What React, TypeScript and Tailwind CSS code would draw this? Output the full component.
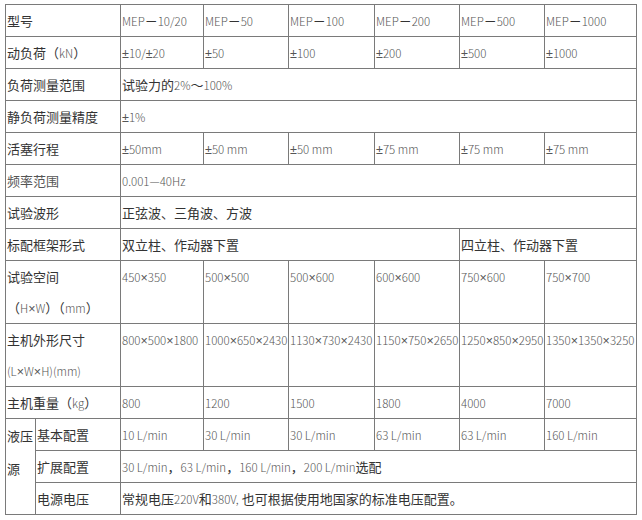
import React from 'react'

const cn = 'text-[#333] font-normal'
const num = 'text-[#555] font-light text-[11.5px] leading-none'

// × and ± come out full width in the CJK font, so draw them in a Latin one
function N({ children }: { children: string }) {
  const parts = children.split(/([×±])/)
  return (
    <span className={num}>
      {parts.map((p, i) =>
        p === '×' || p === '±' ? (
          <span key={i} className="text-[12.5px] leading-none [font-family:'Liberation_Sans',sans-serif]">{p}</span>
        ) : (
          <React.Fragment key={i}>{p}</React.Fragment>
        )
      )}
    </span>
  )
}

function C({ children }: { children: React.ReactNode }) {
  return <span className={cn}>{children}</span>
}

const cell = 'border border-[#7a7a7a] p-0 pl-px align-middle whitespace-nowrap overflow-hidden leading-[31px] text-left'
const top = 'border border-[#7a7a7a] p-0 pl-px align-top whitespace-nowrap overflow-hidden leading-[31px] text-left'

export default function App() {
  const models = ['MEP－10/20', 'MEP－50', 'MEP－100', 'MEP－200', 'MEP－500', 'MEP－1000']
  const loads = ['±10/±20', '±50', '±100', '±200', '±500', '±1000']
  const strokes = ['±50mm', '±50 mm', '±50 mm', '±75 mm', '±75 mm', '±75 mm']
  const spaces = ['450×350', '500×500', '500×600', '600×600', '750×600', '750×700']
  const dims = ['800×500×1800', '1000×650×2430', '1130×730×2430', '1150×750×2650', '1250×850×2950', '1350×1350×3250']
  const weights = ['800', '1200', '1500', '1800', '4000', '7000']
  const flows = ['10 L/min', '30 L/min', '30 L/min', '63 L/min', '63 L/min', '160 L/min']

  return (
    <div className="min-h-[520px] bg-white pl-[5px] pt-[4px] text-[13px] [font-family:'Noto_Sans_CJK_SC','Noto_Sans',sans-serif]">
      <table className="table-fixed border-collapse w-[631px]">
        <colgroup>
          <col className="w-[30px]" />
          <col className="w-[85px]" />
          <col className="w-[83px]" />
          <col className="w-[85px]" />
          <col className="w-[86px]" />
          <col className="w-[85px]" />
          <col className="w-[85px]" />
          <col className="w-[92px]" />
        </colgroup>
        <tbody>
          <tr>
            <td colSpan={2} className={cell}><C>型号</C></td>
            {models.map((m, i) => (
              <td key={i} className={cell}>
                <N>{m.split('－')[0]}</N>
                <C>－</C>
                <N>{m.split('－')[1]}</N>
              </td>
            ))}
          </tr>
          <tr>
            <td colSpan={2} className={cell}><C>动负荷（</C><N>kN</N><C>）</C></td>
            {loads.map((v, i) => (
              <td key={i} className={cell}><N>{v}</N></td>
            ))}
          </tr>
          <tr>
            <td colSpan={2} className={cell}><C>负荷测量范围</C></td>
            <td colSpan={6} className={cell}><C>试验力的</C><N>2%</N><C>～</C><N>100%</N></td>
          </tr>
          <tr>
            <td colSpan={2} className={cell}><C>静负荷测量精度</C></td>
            <td colSpan={6} className={cell}><N>±1%</N></td>
          </tr>
          <tr>
            <td colSpan={2} className={cell}><C>活塞行程</C></td>
            {strokes.map((v, i) => (
              <td key={i} className={cell}><N>{v}</N></td>
            ))}
          </tr>
          <tr>
            <td colSpan={2} className={cell}><span className="text-[#555]">频率范围</span></td>
            <td colSpan={6} className={cell}><N>0.001—40Hz</N></td>
          </tr>
          <tr>
            <td colSpan={2} className={cell}><C>试验波形</C></td>
            <td colSpan={6} className={cell}><C>正弦波、三角波、方波</C></td>
          </tr>
          <tr>
            <td colSpan={2} className={cell}><C>标配框架形式</C></td>
            <td colSpan={4} className={cell}><C>双立柱、作动器下置</C></td>
            <td colSpan={2} className={cell}><C>四立柱、作动器下置</C></td>
          </tr>
          <tr>
            <td colSpan={2} className={top}>
              <C>试验空间</C>
              <br />
              <C>（</C><N>H×W</N><C>）（</C><N>mm</N><C>）</C>
            </td>
            {spaces.map((v, i) => (
              <td key={i} className={top}><N>{v}</N></td>
            ))}
          </tr>
          <tr>
            <td colSpan={2} className={top}>
              <C>主机外形尺寸</C>
              <br />
              <N>(L×W×H)(mm)</N>
            </td>
            {dims.map((v, i) => (
              <td key={i} className={top}><N>{v}</N></td>
            ))}
          </tr>
          <tr>
            <td colSpan={2} className={cell}><C>主机重量（</C><N>kg</N><C>）</C></td>
            {weights.map((v, i) => (
              <td key={i} className={cell}><N>{v}</N></td>
            ))}
          </tr>
          <tr>
            <td rowSpan={3} className="border border-[#7a7a7a] p-0 pl-px align-top overflow-hidden leading-[33px] text-left">
              <C>液压源</C>
            </td>
            <td className={cell}><C>基本配置</C></td>
            {flows.map((v, i) => (
              <td key={i} className={cell}><N>{v}</N></td>
            ))}
          </tr>
          <tr>
            <td className={cell}><C>扩展配置</C></td>
            <td colSpan={6} className={cell}>
              <N>30 L/min</N><C>，</C><N>63 L/min</N><C>，</C><N>160 L/min</N><C>，</C><N>200 L/min</N><C>选配</C>
            </td>
          </tr>
          <tr>
            <td className={cell}><C>电源电压</C></td>
            <td colSpan={6} className={cell}>
              <C>常规电压</C><N>220V</N><C>和</C><N>380V,</N><C> 也可根据使用地国家的标准电压配置。</C>
            </td>
          </tr>
        </tbody>
      </table>
    </div>
  )
}
